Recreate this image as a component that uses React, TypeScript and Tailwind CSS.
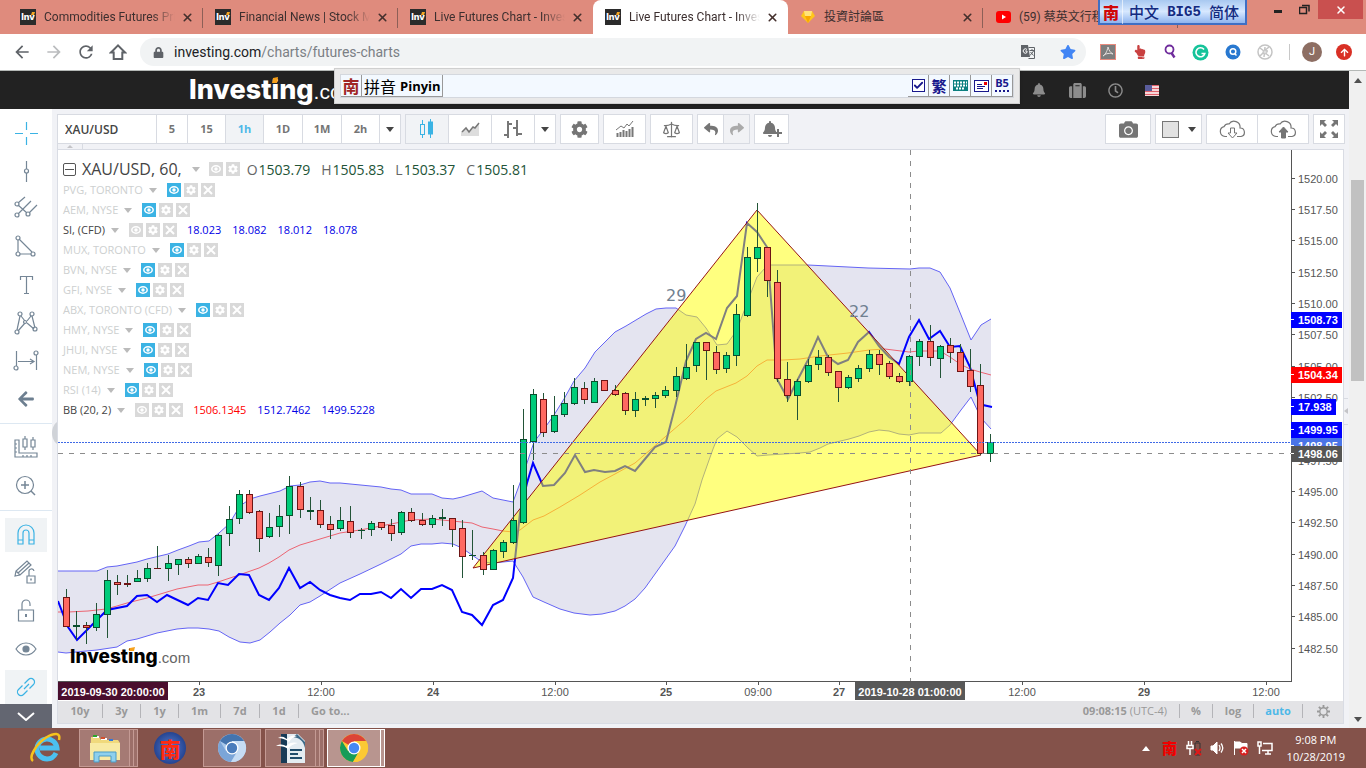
import React from 'react';
import {
  FaBell,
  FaCamera,
  FaCog,
  FaLock,
  FaRegClock,
  FaReply,
  FaShare,
  FaStar,
  FaSuitcase,
  FaArrowLeft,
  FaArrowUp,
  FaHandPointUp,
} from 'react-icons/fa';
import { MdArrowBack, MdArrowForward, MdRefresh } from 'react-icons/md';
import { Check, Scale, X } from 'lucide-react';

type Point = [number, number];
// body top, body bottom, high, low, direction
type Candle = [number, number, number, number, 'u' | 'd'];

const FIRST_X = 66.5;
const STEP_X = 10.159;

const candles: Candle[] = [
  [597, 627, 589, 627, 'd'], [625, 627, 611, 640, 'u'], [625, 628, 622, 644, 'd'], [614, 628, 603, 631, 'u'],
  [580, 615, 570, 638, 'u'], [582, 585, 575, 595, 'd'], [583, 585, 575, 587, 'd'], [578, 582, 570, 582, 'u'],
  [568, 579, 563, 582, 'u'], [568, 569, 546, 568, 'd'], [563, 569, 555, 581, 'u'], [559, 565, 559, 575, 'u'],
  [559, 564, 557, 568, 'd'], [556, 564, 554, 564, 'u'], [557, 563, 548, 567, 'd'], [535, 566, 534, 576, 'u'],
  [519, 534, 506, 546, 'u'], [494, 519, 490, 524, 'u'], [494, 513, 490, 514, 'd'], [511, 539, 510, 552, 'd'],
  [527, 537, 513, 538, 'u'], [516, 527, 505, 537, 'u'], [486, 516, 476, 534, 'u'], [486, 510, 482, 518, 'd'],
  [510, 512, 497, 520, 'u'], [510, 525, 500, 528, 'd'], [524, 530, 516, 539, 'd'], [520, 529, 507, 531, 'u'],
  [521, 533, 506, 538, 'd'], [530, 531, 528, 539, 'u'], [523, 530, 521, 536, 'u'], [522, 528, 522, 530, 'd'],
  [525, 534, 519, 541, 'd'], [512, 533, 511, 535, 'u'], [512, 521, 508, 522, 'd'], [520, 525, 513, 526, 'd'],
  [518, 525, 515, 528, 'u'], [517, 519, 509, 526, 'u'], [518, 530, 518, 547, 'd'], [528, 557, 520, 578, 'd'],
  [555, 556, 530, 560, 'u'], [555, 570, 552, 575, 'd'], [550, 570, 549, 570, 'u'], [542, 552, 540, 558, 'u'],
  [520, 543, 485, 544, 'u'], [439, 523, 409, 524, 'u'], [394, 442, 389, 460, 'u'], [399, 433, 393, 437, 'd'],
  [415, 432, 396, 433, 'u'], [403, 415, 392, 417, 'u'], [387, 404, 378, 405, 'u'], [388, 400, 382, 404, 'd'],
  [381, 403, 378, 403, 'u'], [380, 391, 380, 391, 'd'], [390, 395, 385, 396, 'd'], [393, 411, 392, 415, 'd'],
  [399, 411, 392, 417, 'u'], [398, 400, 396, 406, 'u'], [395, 399, 392, 408, 'u'], [390, 396, 386, 398, 'u'],
  [376, 391, 367, 397, 'u'], [367, 379, 344, 380, 'u'], [342, 366, 342, 372, 'u'], [342, 351, 342, 380, 'd'],
  [352, 370, 346, 374, 'd'], [355, 369, 352, 373, 'u'], [314, 356, 304, 366, 'u'], [257, 316, 247, 317, 'u'],
  [247, 259, 203, 272, 'u'], [247, 281, 247, 297, 'd'], [282, 379, 270, 382, 'd'], [379, 396, 362, 402, 'd'],
  [381, 396, 379, 420, 'u'], [365, 382, 359, 383, 'u'], [357, 365, 350, 370, 'u'], [357, 373, 355, 376, 'd'],
  [371, 388, 371, 402, 'd'], [377, 388, 375, 389, 'u'], [368, 379, 365, 382, 'u'], [354, 369, 350, 372, 'u'],
  [354, 365, 350, 375, 'd'], [363, 377, 361, 379, 'd'], [376, 382, 373, 383, 'd'], [356, 382, 355, 386, 'u'],
  [341, 357, 339, 366, 'u'], [341, 358, 325, 366, 'd'], [346, 359, 345, 378, 'u'], [345, 353, 338, 363, 'd'],
  [352, 372, 344, 372, 'd'], [370, 387, 349, 392, 'd'], [385, 454, 364, 455, 'd'], [442, 454, 434, 462, 'u'],
];

const upperBand: Point[] = [
  [58, 571], [66, 571], [97, 571], [107, 567], [117, 566], [127, 564], [137, 562], [147, 559], [168, 554],
  [178, 550], [189, 546], [199, 542], [209, 541], [219, 533], [229, 524], [240, 506], [250, 499], [260, 496],
  [280, 491], [290, 486], [300, 485], [310, 482], [320, 481], [330, 483], [340, 483], [381, 487], [391, 489],
  [401, 490], [411, 494], [432, 494], [442, 498], [453, 499], [462, 497], [472, 494], [482, 491], [493, 498],
  [513, 502], [520, 483], [527, 463], [534, 442], [544, 429], [554, 415], [564, 399], [574, 381], [585, 368],
  [595, 352], [605, 342], [615, 332], [626, 326], [636, 320], [646, 314], [656, 309], [666, 308], [676, 308],
  [686, 315], [697, 317], [706, 328], [717, 345], [727, 344], [737, 330], [747, 303], [757, 277], [765, 268],
  [771, 265], [808, 265], [868, 268], [910, 269], [919, 268], [930, 268], [940, 272], [950, 288], [961, 315],
  [971, 340], [981, 325], [991, 319],
];

const lowerBand: Point[] = [
  [58, 652], [66, 653], [76, 652], [97, 650], [117, 647], [127, 641], [137, 639], [147, 636], [157, 633],
  [177, 629], [188, 628], [198, 628], [209, 629], [219, 631], [229, 637], [240, 642], [250, 643], [260, 640],
  [270, 632], [280, 623], [290, 615], [300, 605], [310, 602], [320, 596], [340, 583], [360, 574], [381, 564],
  [401, 554], [411, 546], [421, 544], [432, 544], [442, 543], [453, 544], [462, 548], [472, 555], [482, 562],
  [493, 563], [513, 561], [523, 577], [533, 597], [544, 602], [560, 609], [574, 613], [590, 615], [602, 614],
  [615, 611], [625, 606], [635, 599], [645, 588], [655, 574], [665, 560], [675, 546], [685, 526], [695, 504],
  [702, 480], [708, 463], [713, 449], [717, 439], [727, 431], [737, 437], [748, 448], [757, 456], [768, 455],
  [800, 453], [810, 452], [820, 448], [828, 444], [849, 439], [859, 436], [869, 432], [879, 430], [889, 431],
  [899, 434], [909, 435], [919, 433], [941, 433], [950, 425], [961, 410], [971, 397], [981, 418], [991, 429],
];

const basis: Point[] = [
  [58, 612], [68, 612], [88, 611], [106, 609], [117, 606], [127, 603], [147, 598], [167, 592], [177, 589],
  [198, 585], [208, 585], [218, 582], [239, 575], [259, 568], [269, 563], [279, 557], [289, 550], [300, 545],
  [310, 542], [340, 533], [360, 530], [381, 526], [401, 522], [411, 520], [432, 519], [452, 521], [472, 523],
  [482, 527], [493, 529], [503, 531], [513, 532], [520, 530], [533, 520], [544, 516], [560, 507], [580, 495],
  [600, 482], [615, 474], [635, 463], [650, 450], [665, 437], [686, 419], [706, 399], [716, 391], [736, 383],
  [747, 376], [757, 366], [767, 360], [783, 360], [800, 359], [820, 356], [848, 353], [869, 350], [885, 349],
  [909, 352], [919, 351], [940, 351], [950, 357], [960, 364], [970, 369], [980, 372], [991, 375],
];

const silver: Point[] = [
  [58, 601], [68, 627], [77, 640], [107, 610], [127, 606], [137, 596], [147, 595], [157, 602], [167, 595],
  [188, 605], [198, 598], [208, 600], [218, 583], [228, 585], [239, 574], [249, 575], [259, 595], [269, 600],
  [279, 588], [289, 568], [300, 588], [310, 582], [320, 590], [330, 595], [340, 598], [350, 600], [360, 594],
  [371, 594], [381, 592], [391, 598], [401, 589], [411, 598], [421, 589], [432, 589], [442, 585], [452, 590],
  [462, 612], [472, 615], [482, 625], [493, 605], [503, 600], [513, 578], [520, 513], [527, 483], [533, 463],
  [543, 486], [554, 485], [565, 473], [575, 455], [585, 472], [594, 470], [605, 472], [615, 471], [625, 466],
  [635, 471], [645, 459], [655, 447], [666, 442], [675, 407], [686, 361], [696, 339], [706, 333], [716, 339],
  [727, 308], [737, 296], [747, 223], [757, 232], [767, 247], [777, 379], [788, 399], [797, 381], [808, 360],
  [818, 337], [828, 357], [838, 364], [848, 360], [858, 342], [869, 332], [879, 346], [889, 357], [899, 364],
  [909, 337], [919, 320], [929, 339], [940, 331], [950, 347], [960, 346], [970, 367], [978, 397], [983, 405],
  [992, 407],
];

const toPoints = (list: Point[]) => list.map((p) => p.join(',')).join(' ');

const priceTicks = Array.from({ length: 16 }, (_, i) => ({
  label: (1520 - i * 2.5).toFixed(2),
  y: Math.floor(28 + i * 31.35),
}));

const priceTags = [
  { label: '1508.73', y: 162, w: 51, color: '#0000ff' },
  { label: '1504.34', y: 217, w: 51, color: '#ff0000' },
  { label: '17.938', y: 249, w: 45, color: '#0000ff' },
  { label: '1499.95', y: 272, w: 51, color: '#0000ff' },
  { label: '1498.95', y: 288, w: 51, color: '#4a74e8' },
  { label: '1498.06', y: 296, w: 51, color: '#555555' },
];

const timeTicks = [
  { label: '23', x: 199, bold: true },
  { label: '12:00', x: 321 },
  { label: '24', x: 433, bold: true },
  { label: '12:00', x: 555 },
  { label: '25', x: 666, bold: true },
  { label: '09:00', x: 758 },
  { label: '27', x: 839, bold: true },
  { label: '12:00', x: 1022 },
  { label: '29', x: 1144, bold: true },
  { label: '12:00', x: 1266 },
];

const AXIS_FONT = 'font-["Liberation_Sans",Arial,sans-serif]';

/* ---------- browser chrome ---------- */

const InvIcon = () => (
  <span className="relative flex h-4 w-4 shrink-0 items-center justify-center bg-[#2b2b2b] font-[Inter,sans-serif] text-[9px] font-extrabold text-white">
    Inv
    <svg className="absolute right-px top-[3px]" width="4" height="3"><path d="M1 0h3L3 3H0z" fill="#f5a623" /></svg>
  </span>
);

const GemIcon = () => (
  <svg width="16" height="16" viewBox="0 0 16 16" className="shrink-0">
    <path d="M4 2h8l3 5-7 7-7-7z" fill="#ffc61a" />
    <path d="M4 2h8l-1 5H5z" fill="#ffe37a" />
    <path d="M5 7h6l-3 7z" fill="#f9a800" />
  </svg>
);

const YoutubeIcon = () => (
  <svg width="16" height="16" viewBox="0 0 16 16" className="shrink-0">
    <rect x="1" y="2" width="15" height="12" rx="3" fill="#f00" />
    <path d="M7 5.5v5l4-2.5z" fill="#fff" />
  </svg>
);

interface TabProps {
  icon: React.ReactNode;
  title: string;
  active?: boolean;
  divider?: boolean;
  closable?: boolean;
  fade?: boolean;
}

const Tab: React.FC<TabProps> = ({ icon, title, active, divider, closable = true, fade }) => (
  <div
    className={`relative flex h-[34px] w-[195px] shrink items-center pl-3 pr-2 ${active ? 'rounded-t-lg bg-white' : ''}`}
  >
    {icon}
    <span
      className={`ml-2 w-[133px] overflow-hidden whitespace-nowrap text-[12px] text-[#3c2f2f] ${
        fade ? '[mask-image:linear-gradient(to_right,#000_82%,transparent)]' : ''
      }`}
    >
      {title}
    </span>
    {closable && (
      <button aria-label="Close tab" className="ml-1 flex h-4 w-4 items-center justify-center text-[#44302d]">
        <X size={13} strokeWidth={3} />
      </button>
    )}
    {divider && <span className="absolute right-0 top-2 h-5 w-px bg-[#8d5f57]" />}
  </div>
);

const TabStrip = () => (
  <header className="flex h-[34px] bg-[#df8b7d] pl-2">
    <Tab icon={<InvIcon />} title="Commodities Futures Pri" divider fade />
    <Tab icon={<InvIcon />} title="Financial News | Stock M" divider fade />
    <Tab icon={<InvIcon />} title="Live Futures Chart - Inves" fade />
    <Tab icon={<InvIcon />} title="Live Futures Chart - Inves" active fade />
    <Tab icon={<GemIcon />} title="投資討論區" divider />
    <Tab icon={<YoutubeIcon />} title="(59) 蔡英文行程" divider closable={false} />
    <div className="ml-auto flex items-start pr-[3px]">
      <button aria-label="Minimize" className="flex h-[18px] w-[26px] items-center justify-center pt-1">
        <span className="h-[3px] w-2 bg-[#222]" />
      </button>
      <button aria-label="Restore" className="flex h-[18px] w-[27px] items-center justify-center">
        <svg width="11" height="11" fill="none" stroke="#222">
          <path d="M.5 3.500h7v6h-7zM3 1.500h7v6" strokeWidth="1.500" />
        </svg>
      </button>
      <button aria-label="Close" className="flex h-[19px] w-[45px] items-center justify-center bg-[#c9504f] text-white">
        <X size={12} strokeWidth={3} />
      </button>
    </div>
  </header>
);

const AddressBar = () => (
  <div className="flex h-[37px] items-center border-b border-[#b4b8b6] bg-white pl-3 pr-[14px] text-[#5f6368]">
    <button aria-label="Back" className="flex h-6 w-8 items-center"><MdArrowBack size={20} /></button>
    <button aria-label="Forward" className="flex h-6 w-8 items-center text-[#babcbe]"><MdArrowForward size={20} /></button>
    <button aria-label="Reload" className="flex h-6 w-8 items-center"><MdRefresh size={20} /></button>
    <button aria-label="Home" className="flex h-6 w-8 items-center pl-px">
      <svg width="18" height="18" viewBox="0 0 18 18" fill="none" stroke="currentColor" strokeWidth="2">
        <path d="M9 2.400L2 9.500h2.700V16h8.600V9.500H16z" />
      </svg>
    </button>
    <div className="flex h-7 flex-1 items-center rounded-full bg-[#f1f3f4] pl-[13px] pr-[10px]">
      <FaLock size={11} />
      <label htmlFor="address" className="ml-[10px] text-[14px] text-[#202124]">investing.com</label>
      <input id="address" className="min-w-0 flex-1 bg-transparent text-[14px] text-[#7b8085] outline-none" defaultValue="/charts/futures-charts" />
      <svg width="16" height="16" viewBox="0 0 16 16" className="mr-6">
        <path d="M1 1h7l2 12H1z" fill="#5f6368" />
        <path d="M8.500 3.500h6v11h-6" fill="none" stroke="#5f6368" />
        <path d="M9.500 6.500h5M12 5v1.500M10 11.500l4-5M10.500 8l3 3.500" stroke="#5f6368" fill="none" />
        <path d="M7 5.500a2.200 2.200 0 1 0 0 3V7H5.200" stroke="#fff" fill="none" />
      </svg>
      <FaStar size={16} color="#4285f4" />
    </div>
    <div className="ml-[14px] flex items-center gap-4">
      <svg width="16" height="16">
        <rect x=".5" y=".5" width="15" height="15" fill="#7d7d7d" stroke="#e88a7d" />
        <path d="M3 12c2-1 4-4 5-9 1 4 3 6 5 7-3-1-7-1-10 2z" fill="none" stroke="#e6e0de" />
      </svg>
      <span className="flex w-4 justify-center"><FaHandPointUp size={14} color="#c94040" /></span>
      <svg width="12" height="16" viewBox="0 0 12 16" fill="none" stroke="#6f2c9c" strokeWidth="1.800">
        <circle cx="5.500" cy="5.500" r="4" />
        <path d="M7.500 9l3 4.500" strokeWidth="2.400" />
      </svg>
      <svg width="17" height="17" viewBox="0 0 17 17">
        <circle cx="8.500" cy="8.500" r="8" fill="#15c39a" />
        <path d="M12 5.500a4.500 4.500 0 1 0 .8 4H9.500" fill="none" stroke="#fff" strokeWidth="1.600" />
      </svg>
      <svg width="16" height="16" viewBox="0 0 16 16">
        <circle cx="8" cy="8" r="7.500" fill="#2878d0" />
        <circle cx="8" cy="7.500" r="2.800" fill="none" stroke="#fff" strokeWidth="1.500" />
        <path d="M9.500 9.500l2 2" stroke="#fff" strokeWidth="1.500" />
      </svg>
      <svg width="16" height="16" viewBox="0 0 16 16" fill="none" stroke="#c4c4c4">
        <circle cx="8" cy="8" r="7" strokeWidth="1.500" />
        <path d="M3 4l4 3 5-4M3 12l4-4 5 4M6 7h5M8 3l-1 10" strokeWidth="1.500" />
        <circle cx="8" cy="8" r="2" fill="#ddd" />
      </svg>
      <span className="h-4 w-px bg-[#c8c8c8]" />
      <span className="-ml-1 flex h-5 w-5 items-center justify-center rounded-full bg-[#8d6e63] text-[11px] text-white">J</span>
      <span className="-ml-0.5 flex h-4 w-4 items-center justify-center rounded-full bg-[#d93025] text-white"><FaArrowUp size={9} /></span>
    </div>
  </div>
);

/* ---------- floating input method bars ---------- */

const ImeBadge = () => (
  <div className="absolute left-[1098px] top-0 z-20 flex h-[25px] w-[149px] items-center border-2 border-t-0 border-[#3f6fc4] bg-linear-to-b from-[#a8c8f0] via-[#d7e8ff] to-[#8fb4ee] font-['Noto_Sans_CJK_SC',sans-serif]">
    <span className="w-[22px] text-center text-[16px] font-black leading-6 text-[#d00808]">南</span>
    <span className="flex flex-1 items-center justify-between border-l border-white/60 px-[6px] text-[15px] font-medium leading-6 text-[#132a80]">
      <span>中文</span>
      <span className="font-['Liberation_Mono',monospace] text-[14px] font-bold">BIG5</span>
      <span>简体</span>
    </span>
  </div>
);

const IME_KEY = 'flex h-[22px] w-[21px] items-center justify-center border-b border-r border-[#999]';

const ImeBar = () => (
  <div className="absolute left-[334px] top-[68px] z-20 flex h-9 w-[686px] items-center border border-[#cfcfcf] bg-[#e9e9e9] px-[5px] font-['Noto_Sans_CJK_SC',sans-serif] shadow-sm">
    <div className="flex h-6 flex-1 items-center border border-[#d4d8de] bg-[#f3f9ff]">
      <span className={`${IME_KEY} text-[17px] font-bold leading-5 text-[#a02525]`}>南</span>
      <label htmlFor="ime" className="flex h-[22px] w-[81px] items-center gap-1 whitespace-nowrap border-b border-r border-[#999] pl-0.5 text-[16px] leading-5 text-black">
        拼音
        <b className="font-['Open_Sans',sans-serif] text-[13px]">Pinyin</b>
      </label>
      <input id="ime" className="h-full min-w-0 flex-1 bg-transparent outline-none" />
      <label className={`relative ${IME_KEY}`}>
        <input type="checkbox" defaultChecked aria-label="Enabled" className="peer h-[13px] w-[13px] appearance-none border border-[#18188c] bg-white" />
        <Check size={11} strokeWidth={4} className="pointer-events-none absolute hidden text-[#18188c] peer-checked:block" />
      </label>
      <button className={`${IME_KEY} text-[15px] font-bold leading-5 text-[#18188c]`}>繁</button>
      <button aria-label="Keyboard" className={IME_KEY}>
        <svg width="15" height="11">
          <rect width="15" height="11" fill="#0b8080" />
          <path d="M1 2.500h13M1 5.500h13M3 8.500h9" stroke="#fff" strokeDasharray="2 1" strokeWidth="2" />
        </svg>
      </button>
      <button aria-label="Mail" className={IME_KEY}>
        <svg width="15" height="12">
          <rect x=".5" y=".5" width="14" height="11" fill="#fff" stroke="#18188c" />
          <path d="M3 4.500h5M3 6.500h8M3 8.500h6" stroke="#18188c" />
          <rect x="10" y="2" width="3" height="3" fill="#e00" />
        </svg>
      </button>
      <button className="flex h-[22px] w-[21px] flex-col items-center border-b border-r border-[#999] font-['Open_Sans',sans-serif] text-[11px] font-bold leading-[15px] text-[#18188c]">
        B5
        <span className="w-[14px] border-t-2 border-dotted border-[#18188c]" />
      </button>
    </div>
  </div>
);

/* ---------- site header ---------- */

const SiteHeader = () => (
  <div className="flex h-[38px] items-center bg-[#222]">
    <a href="#home" className="relative ml-[189px] flex w-[165px] shrink-0 items-baseline pt-0.5 leading-9 text-white">
      <span className="font-[Inter,sans-serif] text-[27px] font-extrabold">Investing</span>
      <span className={`${AXIS_FONT} text-[21px]`}>.com</span>
      <svg className="absolute left-[82px] top-[7px]" width="8" height="7"><path d="M2 1l5-1-1 6H1z" fill="#f7a11a" /></svg>
    </a>
    <nav className="ml-auto mr-[179px] flex items-center text-[#8c8c8c]">
      <a href="#alerts" aria-label="Alerts" className="flex w-[38px] justify-center"><FaBell size={14} /></a>
      <a href="#portfolio" aria-label="Portfolio" className="flex w-[38px] justify-center"><FaSuitcase size={17} /></a>
      <a href="#recent" aria-label="Recent" className="flex w-[38px] justify-center"><FaRegClock size={15} /></a>
      <a href="#edition" aria-label="Edition" className="flex w-9 justify-center">
        <svg width="14" height="11">
          <rect width="14" height="11" fill="#fff" />
          <path d="M0 .5h14M0 3.500h14M0 6.500h14M0 9.500h14" stroke="#e0606a" strokeWidth="1.500" />
          <rect width="7" height="6" fill="#5a5d9c" />
        </svg>
      </a>
    </nav>
  </div>
);

/* ---------- drawing tools ---------- */

const SideIcon: React.FC<{ children: React.ReactNode; blue?: boolean }> = ({ children, blue }) => (
  <svg width="26" height="26" viewBox="0 0 26 26" fill="none" stroke={blue ? '#3bb3e4' : '#758696'} strokeWidth="1.200">
    {children}
  </svg>
);

const drawTools = [
  { name: 'Crosshair', blue: true, icon: <path d="M13.500 2v8M13.500 17v8M2 13.500h8M17 13.500h8" /> },
  { name: 'Vertical line', icon: <><path d="M13.500 3v8M13.500 15v9" /><circle cx="13.500" cy="13" r="2" /></> },
  { name: 'Pitchfork', icon: <><path d="M5 7l7-6M5 18L18 5M16 17l8-8M5 9l9 8" /><circle cx="4" cy="8" r="2" /><circle cx="4" cy="19" r="2" /><circle cx="15" cy="18" r="2" /></> },
  { name: 'Triangle', icon: <><path d="M5 6v12M7 20h11M6 5l13 13" /><circle cx="5" cy="4" r="2" /><circle cx="5" cy="20" r="2" /><circle cx="20" cy="20" r="2" /></> },
  { name: 'Text', icon: <path d="M7.500 8V4.500h12V8M13.500 4.500v17M11 21.500h5" /> },
  { name: 'Pattern', icon: <><path d="M4 20L7 6M8 6l4 5M14 11l4-5M19 6l3 12M5 21l7-8M14 13l7 6" /><circle cx="7" cy="4" r="2" /><circle cx="19" cy="4" r="2" /><circle cx="12" cy="12" r="1.500" /><circle cx="4" cy="22" r="2" /><circle cx="22" cy="19" r="2" /></> },
  { name: 'Measure', icon: <><path d="M3.500 3v15M5 13.500h15M17 11l4 2.500-4 2.500M23.500 7v15" /><circle cx="3" cy="20" r="2" /><circle cx="23" cy="5" r="2" /></> },
];

const TOOL = 'flex h-[38px] w-[42px] items-center justify-center';

const DrawingTools = () => (
  <aside className="flex w-[52px] shrink-0 flex-col items-center bg-white pt-[5px]">
    {drawTools.map((t) => (
      <button key={t.name} aria-label={t.name} className={TOOL}>
        <SideIcon blue={t.blue}>{t.icon}</SideIcon>
      </button>
    ))}
    <button aria-label="Hide tools" className={`${TOOL} text-[#6d7f90]`}>
      <FaArrowLeft size={18} />
    </button>
    <div className="my-[5px] h-px w-full bg-[#dde8f2]" />
    <button aria-label="Ruler" className={TOOL}>
      <SideIcon>
        <path d="M2 5v17h22v-4H6V5zM2 9h2M2 13h2M2 17h2M10 20v2M14 20v2M18 20v2M12 1v3M12 12v3M20 2v3M20 12v3" />
        <path d="M10 4h4v8h-4zM18 5h4v7h-4z" />
      </SideIcon>
    </button>
    <button aria-label="Zoom in" className={TOOL}>
      <SideIcon><circle cx="12" cy="12" r="8.500" /><path d="M18 18l4 4M12 8v8M8 12h8" strokeWidth="1.500" /></SideIcon>
    </button>
    <div className="my-[5px] h-px w-full bg-[#dde8f2]" />
    <button aria-label="Magnet" className="my-0.5 flex h-[34px] w-[42px] items-center justify-center bg-[#f0f3f5]">
      <SideIcon blue>
        <path d="M5 22V11a8 8 0 0 1 16 0v11h-5V11a3 3 0 0 0-6 0v11zM5 18h5M16 18h5" />
      </SideIcon>
    </button>
    <button aria-label="Stay in drawing mode" className={TOOL}>
      <SideIcon>
        <path d="M2 16l1-5L14 1l4 4L7 15zM3 11l4 4M5 13L16 3M14 16h8v7h-8zM16 16v-4a2.500 2.500 0 0 1 5-1" />
        <path d="M18 18.500v2" strokeWidth="1.500" />
      </SideIcon>
    </button>
    <button aria-label="Lock drawings" className={TOOL}>
      <SideIcon><path d="M5.500 12h15v11h-15zM9 12V6a4 4 0 0 1 8 0v2" /><path d="M13 16v3" strokeWidth="2" /></SideIcon>
    </button>
    <button aria-label="Hide drawings" className={TOOL}>
      <SideIcon><path d="M3 13c5-8 15-8 20 0-5 8-15 8-20 0z" /><circle cx="13" cy="13" r="3" fill="#758696" /></SideIcon>
    </button>
    <button aria-label="Link" className="mt-[2px] flex h-[34px] w-[42px] items-center justify-center bg-[#f0f3f5]">
      <SideIcon blue>
        <path d="M11 15l5-5M11.500 9.500l4-4a3.300 3.300 0 0 1 5 5l-4 4M14.500 16.500l-4 4a3.300 3.300 0 0 1-5-5l4-4" />
      </SideIcon>
    </button>
    <button aria-label="More tools" className="mt-auto flex h-6 w-full items-start justify-center bg-[#636671] pt-2">
      <svg width="18" height="9" fill="none" stroke="#fff" strokeWidth="2"><path d="M1 1l8 7 8-7" /></svg>
    </button>
  </aside>
);

/* ---------- chart toolbar ---------- */

const Caret = ({ className = 'text-[#444]' }: { className?: string }) => (
  <svg width="8" height="5" className={className}><path d="M0 0h8L4 5z" fill="currentColor" /></svg>
);

interface ToolButtonProps {
  label: string;
  className: string;
  children: React.ReactNode;
}

const ToolButton: React.FC<ToolButtonProps> = ({ label, className, children }) => (
  <button
    aria-label={label}
    className={`-ml-px flex h-[30px] items-center justify-center border border-[#d8dbe2] text-[#757575] ${className}`}
  >
    {children}
  </button>
);

const intervals = [
  { label: '5', className: 'w-8 bg-white' },
  { label: '15', className: 'w-[39px] bg-white' },
  { label: '1h', className: 'w-[39px] bg-[#f1f3f6] text-[#4db8e8]!' },
  { label: '1D', className: 'w-10 bg-white' },
  { label: '1M', className: 'w-10 bg-white' },
  { label: '2h', className: 'w-[39px] bg-white' },
];

const CloudIcon = ({ up }: { up?: boolean }) => (
  <svg width="27" height="19" viewBox="0 0 27 19" fill="none" stroke="#757575">
    <path d="M8 16.500H6a5 5 0 0 1-1-9.800A5 5 0 0 1 10 4a6 6 0 0 1 11 4 4.300 4.300 0 0 1 1 8.500h-4" strokeWidth="1.200" />
    {up
      ? <path d="M11.500 18v-6H9l4.500-5 4.500 5h-2.500v6z" fill="#757575" />
      : <path d="M11.500 8v5H9l4.500 5 4.500-5h-2.500V8z" fill="#fff" />}
  </svg>
);

const ChartToolbar = () => (
  <div className="flex gap-[4px] pl-px pt-[5px] font-['Open_Sans',sans-serif] text-[11px] font-bold">
    <div className="flex">
      <input
        aria-label="Symbol"
        defaultValue="XAU/USD"
        className="-ml-px h-[30px] w-[100px] border border-[#d8dbe2] bg-white pl-[7px] text-[12px] font-semibold text-[#444] outline-none"
      />
      {intervals.map((i) => (
        <ToolButton key={i.label} label={i.label} className={i.className}>{i.label}</ToolButton>
      ))}
      <ToolButton label="More intervals" className="w-[22px] bg-white"><Caret /></ToolButton>
    </div>
    <div className="ml-px flex">
      <ToolButton label="Candles" className="w-11 bg-[#f1f3f6]">
        <svg width="14" height="20" stroke="#3bb3e4" fill="none">
          <path d="M2.500 1v4M2.500 15v4M10.500 0v3M10.500 15v4" />
          <rect x=".5" y="5.500" width="4" height="10" />
          <rect x="8.500" y="3" width="4" height="12" fill="#3bb3e4" />
        </svg>
      </ToolButton>
      <ToolButton label="Area" className="w-11 bg-white">
        <svg width="19" height="14">
          <path d="M0 10l5-4 4 3 9-8v13H0z" fill="#ddd" />
          <path d="M1 10l4-4 3 4 4-5 2 1 4-5" fill="none" stroke="#777" strokeWidth="1.500" />
        </svg>
      </ToolButton>
      <ToolButton label="Bars" className="w-11 bg-white">
        <svg width="18" height="18" fill="none" stroke="#777" strokeWidth="2">
          <path d="M0 15h4M4 18V1M4 4h4M9 8h4M13 0v16M13 14h5" />
        </svg>
      </ToolButton>
      <ToolButton label="Bar style" className="w-[22px] bg-white"><Caret /></ToolButton>
    </div>
    <div className="ml-px flex"><ToolButton label="Properties" className="w-[39px] bg-white"><FaCog size={17} /></ToolButton></div>
    <div className="ml-px flex">
      <ToolButton label="Indicators" className="w-[43px] bg-white">
        <svg width="18" height="16" stroke="#777" fill="none">
          <path d="M1.500 16v-4M4.500 16v-5M7.500 16v-7M10.500 16V10M13.500 16V8M16.500 16V6" strokeWidth="2" />
          <path d="M0 9l5-4 3 2 3-4 2 2 4-5" />
        </svg>
      </ToolButton>
    </div>
    <div className="ml-px flex"><ToolButton label="Compare" className="w-[43px] bg-white"><Scale size={19} strokeWidth={1.5} /></ToolButton></div>
    <div className="ml-px flex">
      <ToolButton label="Undo" className="w-[27px] bg-white"><FaReply size={14} /></ToolButton>
      <ToolButton label="Redo" className="w-[27px] bg-[#f1f2f5] text-[#aaa]!"><FaShare size={14} /></ToolButton>
    </div>
    <div className="ml-px flex">
      <ToolButton label="Add alert" className="w-[35px] bg-white">
        <FaBell size={16} />
        <svg width="8" height="8" className="-ml-1 mt-2"><path d="M4 0v8M0 4h8" stroke="#757575" strokeWidth="2" /></svg>
      </ToolButton>
    </div>
    <div className="ml-auto flex"><ToolButton label="Snapshot" className="w-[46px] bg-white"><FaCamera size={19} /></ToolButton></div>
    <div className="ml-px flex">
      <ToolButton label="Background" className="w-[47px] gap-[9px] bg-white">
        <span className="h-[17px] w-[17px] border border-[#777] bg-[#e2e2e2]" />
        <Caret />
      </ToolButton>
    </div>
    <div className="ml-px flex">
      <ToolButton label="Load chart" className="w-[52px] bg-white"><CloudIcon /></ToolButton>
      <ToolButton label="Save chart" className="w-[52px] bg-white"><CloudIcon up /></ToolButton>
    </div>
    <div className="-mr-px ml-px flex">
      <ToolButton label="Full screen" className="w-8 bg-white">
        <svg width="18" height="18" fill="#757575">
          <path d="M0 0h6L4 2l3 3-2 2-3-3-2 2zM18 0v6l-2-2-3 3-2-2 3-3-2-2zM0 18v-6l2 2 3-3 2 2-3 3 2 2zM18 18h-6l2-2-3-3 2-2 3 3 2-2z" />
        </svg>
      </ToolButton>
    </div>
  </div>
);

/* ---------- chart ---------- */

const LegendButton = ({ kind, on }: { kind: 'eye' | 'gear' | 'x'; on?: boolean }) => (
  <button aria-label={kind} className={`flex h-[14px] w-[14px] items-center justify-center text-white ${on ? 'bg-[#3bb3e4]' : 'bg-[#d9d9d9]'}`}>
    {kind === 'eye' && (
      <svg width="10" height="8" fill="none" stroke="currentColor" strokeWidth="1.500">
        <ellipse cx="5" cy="4" rx="4.200" ry="3.200" /><circle cx="5" cy="4" r="1" fill="currentColor" />
      </svg>
    )}
    {kind === 'gear' && <FaCog size={10} />}
    {kind === 'x' && (
      <svg width="10" height="10" stroke="currentColor" strokeWidth="2"><path d="M1 1l8 8M9 1l-8 8" /></svg>
    )}
  </button>
);

interface LegendItem {
  name: string;
  shown?: boolean;
  values?: { text: string; className: string }[];
}

const legend: LegendItem[] = [
  { name: 'PVG, TORONTO' },
  { name: 'AEM, NYSE' },
  {
    name: 'SI, (CFD)',
    shown: true,
    values: ['18.023', '18.082', '18.012', '18.078'].map((text) => ({ text, className: 'text-[#0000e6]' })),
  },
  { name: 'MUX, TORONTO' },
  { name: 'BVN, NYSE' },
  { name: 'GFI, NYSE' },
  { name: 'ABX, TORONTO (CFD)' },
  { name: 'HMY, NYSE' },
  { name: 'JHUI, NYSE' },
  { name: 'NEM, NYSE' },
  { name: 'RSI (14)' },
  {
    name: 'BB (20, 2)',
    shown: true,
    values: [
      { text: '1506.1345', className: 'text-[#ff0000]' },
      { text: '1512.7462', className: 'text-[#0000e6]' },
      { text: '1499.5228', className: 'text-[#0000e6]' },
    ],
  },
];

const ohlc = [['O', '1503.79'], ['H', '1505.83'], ['L', '1503.37'], ['C', '1505.81']];

const Legend = () => (
  <div className="absolute left-[5px] top-[9px] whitespace-nowrap font-['Open_Sans',sans-serif]">
    <div className="mb-px flex h-5 items-center">
      <button aria-label="Collapse legend" className="flex h-[13px] w-[13px] items-center justify-center rounded-xs border border-[#555]">
        <span className="h-px w-[9px] bg-[#555]" />
      </button>
      <span className="ml-[6px] text-[16px] text-[#444]">XAU/USD, 60,</span>
      <Caret className="ml-[10px] mr-[9px] text-[#bbb]" />
      <span className="flex gap-[3px]"><LegendButton kind="eye" /><LegendButton kind="gear" /></span>
      <span className="ml-[7px] flex gap-[11px] text-[14px] text-[#225437]">
        {ohlc.map(([k, v]) => (
          <span key={k}><span className="mr-px text-[#666]">{k}</span>{v}</span>
        ))}
      </span>
    </div>
    {legend.map((row) => (
      <div key={row.name} className="flex h-5 items-center text-[11px]">
        <span className={row.shown ? 'text-[#444]' : 'font-medium text-[#cdd0d0]'}>{row.name}</span>
        <Caret className="ml-[6px] mr-[10px] text-[#bbb]" />
        <span className="flex gap-[3px]">
          <LegendButton kind="eye" on={!row.shown} />
          <LegendButton kind="gear" />
          <LegendButton kind="x" />
        </span>
        {row.values && (
          <span className="ml-[10px] flex gap-[11px]">
            {row.values.map((v) => <span key={v.text} className={v.className}>{v.text}</span>)}
          </span>
        )}
      </div>
    ))}
  </div>
);

const Plot = () => (
  <svg width="100%" height="532" className="block border-b border-[#555]">
    {/* pixel rows of the data start below the toolbars */}
    <g transform="translate(-58 -150)">
      <polygon points={`${toPoints(upperBand)} ${toPoints([...lowerBand].reverse())}`} fill="#e4e4f0" />
      <polyline points={toPoints(upperBand)} fill="none" stroke="#6464f5" />
      <polyline points={toPoints(lowerBand)} fill="none" stroke="#6464f5" />
      <polyline points={toPoints(basis)} fill="none" stroke="#ec6472" />
      <polyline points={toPoints(silver)} fill="none" stroke="#0000ff" strokeWidth="2" />
      <polygon points="473,568 757,210 981,455" fill="#ffff00" fillOpacity="0.5" stroke="#961414" />
      {candles.map(([top, bottom, high, low, dir], i) => {
        const x = Math.floor(FIRST_X + i * STEP_X);
        const up = dir === 'u';
        const edge = up ? '#0b4f2e' : '#6e1414';
        return (
          <g key={i} shapeRendering="crispEdges">
            <rect x={x} y={high} width="1" height={low - high} fill="#225437" />
            <rect x={x - 3} y={top} width="7" height={bottom - top} fill={edge} />
            {bottom - top > 2 && (
              <rect x={x - 2} y={top + 1} width="5" height={bottom - top - 2} fill={up ? '#00cc7a' : '#ff6961'} />
            )}
          </g>
        );
      })}
      <g fontSize="16" fill="#708090" className="font-['DejaVu_Sans',sans-serif]">
        <text x="666" y="301">29</text>
        <text x="849" y="317">22</text>
      </g>
      <path d="M58 442.500H3000" stroke="#3f6ae6" strokeDasharray="2 1" />
      <path d="M58 453.500H3000" stroke="#8c8c8c" strokeDasharray="5 6" />
      <path d="M910.500 150V682" stroke="#8c8c8c" strokeDasharray="5 6" />
    </g>
  </svg>
);

const PriceAxis = () => (
  <svg width="52" height="551" className={`block shrink-0 text-[11px] ${AXIS_FONT}`}>
    <path d="M.5 0v532" stroke="#555" />
    {priceTicks.map((t) => (
      <g key={t.label}>
        <path d={`M0 ${t.y + 0.5}h4`} stroke="#555" />
        <text x="7" y={t.y + 5} fill="#555">{t.label}</text>
      </g>
    ))}
    {priceTags.map((t) => (
      <g key={t.label}>
        <rect y={t.y} width={t.w} height="16" fill={t.color} />
        <path d={`M0 ${t.y + 7.5}h3`} stroke="#fff" />
        <text x="7" y={t.y + 12} fill="#fff" fontWeight="700">{t.label}</text>
      </g>
    ))}
  </svg>
);

const TimeAxis = () => (
  <svg width="100%" height="19" className={`block overflow-visible text-[11px] ${AXIS_FONT}`}>
    <g transform="translate(-58)" textAnchor="middle" fill="#555">
      {timeTicks.map((t) => (
        <g key={t.x}>
          <path d={`M${t.x + 0.5} 0v3`} stroke="#555" />
          <text x={t.x} y="14" fontWeight={t.bold ? 700 : 400}>{t.label}</text>
        </g>
      ))}
      <rect x="58" width="110" height="18" fill="#4a0e2e" />
      <rect x="855" width="110" height="18" fill="#585858" />
      <g fill="#fff" fontWeight="700">
        <text x="113" y="14">2019-09-30 20:00:00</text>
        <text x="910" y="14">2019-10-28 01:00:00</text>
      </g>
    </g>
  </svg>
);

const Sep = () => <span className="h-[14px] w-px bg-[#b4b4b8]" />;

const ranges = [
  { label: '10y', className: 'w-11' },
  { label: '3y', className: 'w-[37px]' },
  { label: '1y', className: 'w-[37px]' },
  { label: '1m', className: 'w-[41px]' },
  { label: '7d', className: 'w-[38px]' },
  { label: '1d', className: 'w-[38px]' },
];

const StatusBar = () => (
  <div className="flex h-[22px] items-center bg-[#e3e3e6] pb-0.5 font-['Open_Sans',sans-serif] text-[11px] font-bold text-[#999]">
    {ranges.map((r) => (
      <React.Fragment key={r.label}>
        <button className={r.className}>{r.label}</button>
        <Sep />
      </React.Fragment>
    ))}
    <button className="ml-3">Go to...</button>
    <span className="ml-auto mr-3">09:08:15 <span className="font-medium">(UTC-4)</span></span>
    <Sep />
    <button className="w-8">%</button>
    <Sep />
    <button className="w-10">log</button>
    <Sep />
    <button className="w-12 text-[#4db8e8]">auto</button>
    <Sep />
    <button aria-label="Chart settings" className="flex w-10 justify-center">
      <svg width="13" height="13" viewBox="0 0 14 14" fill="none" stroke="#999">
        <circle cx="7" cy="7" r="4" strokeWidth="1.500" />
        <path d="M7 0v3M7 11v3M0 7h3M11 7h3M2 2l2 2M10 10l2 2M2 12l2-2M10 4l2-2" strokeWidth="2" />
      </svg>
    </button>
  </div>
);

const ChartPanel = () => (
  <section className="relative mx-[5px] flex min-w-0 flex-1 flex-col">
    <ChartToolbar />
    <div className="flex h-[5px] w-[26px] items-center justify-center border-x border-[#d8dbe2]">
      <svg width="6" height="3"><path d="M3 0l3 3H0z" fill="#c4c4c8" /></svg>
    </div>
    <div className="border border-[#d9dce4] bg-white">
      <div className="relative flex">
        <div className="min-w-0 flex-1">
          <Plot />
          <TimeAxis />
        </div>
        <PriceAxis />
        <Legend />
        <div className="absolute bottom-[27px] left-[12px] flex items-baseline leading-8">
          <span className="font-[Inter,sans-serif] text-[19px] font-extrabold text-black">Investing</span>
          <span className={`${AXIS_FONT} text-[15px] text-[#666]`}>.com</span>
          <svg className="absolute left-[59px] top-[6px]" width="6" height="5"><path d="M1 1l5-1-1 4H0z" fill="#f7a11a" /></svg>
        </div>
      </div>
      <StatusBar />
    </div>
    {/* panel resize handles */}
    <svg className="absolute -left-[5px] top-[313px]" width="5" height="22"><path d="M5 0C1 3 0 8 0 11s1 8 5 11z" fill="#d0d3d8" /></svg>
    <svg className="absolute -right-[5px] top-[289px]" width="6" height="28">
      <path d="M0 .5h5M0 26.500h5" stroke="#d8dbe2" />
      <path d="M5 10v6l-4-3z" fill="#c4c4c8" />
    </svg>
  </section>
);

const ScrollBar = () => (
  <div className="flex w-[17px] shrink-0 flex-col items-center bg-[#f0f0f0] pb-1.5 pt-[7px]">
    <Caret className="rotate-180 text-[#505050]" />
    <span className="mt-[97px] h-[201px] w-[13px] bg-[#c1c1c1]" />
    <Caret className="mt-auto text-[#505050]" />
  </div>
);

/* ---------- windows taskbar ---------- */

const ChromeIcon = ({ blue }: { blue?: boolean }) => (
  <svg width="30" height="30" viewBox="0 0 30 30">
    <circle cx="15" cy="15" r="14" fill={blue ? '#a9c8ea' : '#fbc934'} />
    <path d="M15 15L2.900 8A14 14 0 0 1 27.100 8z" fill={blue ? '#4474ae' : '#dc4437'} />
    <path d="M2.900 8A14 14 0 0 0 14 29l5-9-4-5-6 3z" fill={blue ? '#7ba5d8' : '#169c58'} />
    <path d="M27.100 8H15v7l4 6-5 8A14 14 0 0 0 27.100 8z" fill={blue ? '#c6dcf4' : '#fbc934'} />
    <circle cx="15" cy="15" r="6.500" fill="#fff" />
    <circle cx="15" cy="15" r="5.200" fill={blue ? '#4a7cbc' : '#4688f4'} />
  </svg>
);

const Taskbar = () => (
  <footer className="flex h-10 items-center bg-[#84524a] pl-[30px] text-white">
    <a href="#ie" aria-label="Internet Explorer" className="mr-4 block">
      <svg width="33" height="32" viewBox="0 0 33 32" fill="none">
        <path d="M26 21c-2 4-5 6-9 6a10 10 0 1 1 10-11H10" stroke="#4cc0f0" strokeWidth="5" />
        <path d="M3 29c-5-4 4-18 14-24C24 1 31 0 29 8" stroke="#f6c21c" strokeWidth="2.500" />
      </svg>
    </a>
    <div className="flex h-[38px] w-[51px] items-center justify-center border border-[#c49a94] bg-[#a57a74]">
      <svg width="32" height="30" viewBox="0 0 32 30">
        <path d="M2 4h8l2 3h17l2 3v17H1z" fill="#f0d97c" />
        <path d="M4 3h6v2H4zM12 5h6v2h-6z" fill="#fff" />
        <path d="M4 2h4v2H4z" fill="#2ba52b" /><path d="M12 4h4v2h-4z" fill="#d4502c" /><path d="M20 6h4v2h-4z" fill="#3478d8" />
        <path d="M1 10h30v17H1z" fill="#f8eaa4" />
        <path d="M5 29V19h22v10h-5v-6H10v6z" fill="#8fd0ee" stroke="#4b9cc6" />
      </svg>
    </div>
    <span className="h-[38px] w-1 border-r border-y border-[#c49a94] bg-[#9c6f69]" />
    <span className="mr-4 h-[38px] w-1 border-r border-y border-[#c49a94] bg-[#9c6f69]" />
    <div className="mr-[17px] flex h-8 w-8 items-center justify-center rounded-full bg-radial from-[#5b7fd0] to-[#102c78] font-['Noto_Sans_CJK_SC',sans-serif] text-[21px] font-black leading-8 text-[#ff2a10]">南</div>
    <div className="mr-1 flex h-[38px] w-[58px] items-center justify-center border border-[#c49a94] bg-[#9c6f69]"><ChromeIcon blue /></div>
    <div className="flex h-[38px] w-[51px] items-center justify-center border border-[#c49a94] bg-[#9c6f69]">
      <svg width="32" height="32" viewBox="0 0 32 32">
        <path d="M6 2h17l7 7v22H6z" fill="#e4ecf2" />
        <path d="M6 2h6v29H6z" fill="#173a56" />
        <path d="M22 2l8 8v6c-2-8-6-10-12-11z" fill="#3d6a88" />
        <path d="M15 18h12M15 22h8M15 26h12" stroke="#1f4c6c" strokeWidth="2" />
        <path d="M3 6c5-3 7 0 9 1 4-4 7-4 10-3-4 1-6 3-8 6-4-3-7-4-11-4zM1 14c5-3 8-1 10 0 4-4 8-4 12-3-5 1-8 3-10 6-4-3-7-3-12-3z" fill="#fff" />
      </svg>
    </div>
    <span className="h-[38px] w-1 border-r border-y border-[#c49a94] bg-[#9c6f69]" />
    <span className="mr-[3px] h-[38px] w-1 border-r border-y border-[#c49a94] bg-[#9c6f69]" />
    <div className="flex h-[38px] w-[54px] items-center justify-center border border-white bg-[#b8958f]"><ChromeIcon /></div>
    <span className="h-[38px] w-1 border-y border-r border-white bg-[#b8958f]" />
    <div className="ml-auto flex items-center gap-2 pr-[21px]">
      <Caret className="mr-1 rotate-180 text-white" />
      <span className="flex w-4 justify-center font-['Noto_Sans_CJK_SC',sans-serif] text-[15px] font-black leading-5 text-[#f00000]">南</span>
      <svg width="16" height="16" viewBox="0 0 16 16" fill="none" stroke="#fff">
        <path d="M2.500 1v4M5.500 1v4M1 5.500h6v3H1zM4 9v6" strokeWidth="1.500" />
        <path d="M9 3h5v12H9zM10 1.500h3" stroke="#333" />
        <path d="M9 9l6 6M15 9l-6 6" stroke="#e01818" strokeWidth="2" />
      </svg>
      <svg width="15" height="14" viewBox="0 0 15 14" fill="none" stroke="#fff">
        <path d="M1 5h2l4-4v12L3 9H1z" fill="#fff" />
        <path d="M9 4q2 3 0 6M11 2.500q3.500 4.500 0 9" strokeWidth="1.300" />
      </svg>
      <svg width="16" height="16" viewBox="0 0 16 16">
        <path d="M1.500 1v14M2 2h5l2 1.500h5V9H9L7 8H2z" fill="#fff" stroke="#fff" />
        <circle cx="11" cy="11" r="4.500" fill="#d82020" />
        <path d="M9 9l4 4M13 9l-4 4" stroke="#fff" strokeWidth="1.500" />
      </svg>
      <svg width="16" height="14" viewBox="0 0 16 14" fill="none" stroke="#fff" strokeWidth="1.500">
        <path d="M6 2.500h9v7H5M8 13h6M11 10v3M2.500 5v8" />
        <rect x="1" y="1" width="3" height="4" />
      </svg>
      <div className="ml-[6px] text-center font-['Open_Sans',sans-serif] text-[11px] leading-[17px]">
        <div>9:08 PM</div>
        <div>10/28/2019</div>
      </div>
    </div>
  </footer>
);

const App: React.FC = () => (
  <div className="relative flex min-h-screen flex-col overflow-hidden bg-[#f1f2f6] font-[Roboto,'Noto_Sans_CJK_TC',sans-serif]">
    <TabStrip />
    <AddressBar />
    <ImeBadge />
    <ImeBar />
    <div className="flex flex-1">
      <main className="flex min-w-0 flex-1 flex-col">
        <SiteHeader />
        <div className="flex flex-1">
          <DrawingTools />
          <ChartPanel />
        </div>
      </main>
      <ScrollBar />
    </div>
    <Taskbar />
  </div>
);

export default App;
